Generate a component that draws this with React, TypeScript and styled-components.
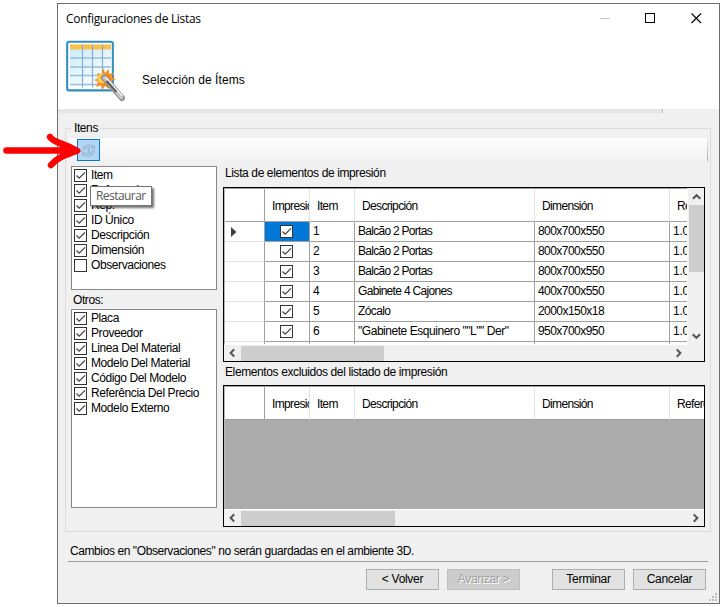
import React from 'react';
import styled, { createGlobalStyle } from 'styled-components';

const Global = createGlobalStyle`
  * { box-sizing: border-box; }
  body { margin: 0; background: #fff; }
`;

const Page = styled.div`
  position: relative;
  width: 723px;
  height: 607px;
  padding: 3px 0 0 57px;
  overflow: hidden;
  background: #fff;
  color: #000;
  font: 12px/15px 'Liberation Sans', Arial, sans-serif;
  letter-spacing: -0.41px;
  white-space: nowrap;
  cursor: default;
`;

const Dialog = styled.main`
  display: flex;
  flex-direction: column;
  width: 663px;
  height: 601px;
  border: 1px solid #6e6e6e;
  background: #f0f0f0;
`;

const Header = styled.header`
  height: 105px;
  flex: none;
  background: #fff;
`;

const TitleBar = styled.div`
  display: flex;
  align-items: center;
  height: 30px;
  padding: 0 17px 0 8px;
`;

const Title = styled.h1`
  flex: 1;
  margin: 0;
  font: 400 12px/16px 'Open Sans', sans-serif;
  letter-spacing: -0.31px;
`;

const Controls = styled.div`
  display: flex;
  gap: 35px;
  margin-top: -2px;
`;

const Banner = styled.div`
  display: flex;
  gap: 16px;
  padding: 4px 0 0 7px;
`;

const Step = styled.h2`
  margin: 34px 0 0;
  font-weight: 400;
  font-size: 12px;
  line-height: 16px;
  letter-spacing: 0.08px;
`;

const Divider = styled.div`
  flex: none;
  width: 605px;
  height: 4px;
  border-right: 1px solid #b9b9b9;
  background: #e5e5e5;
`;

const Group = styled.fieldset`
  flex: none;
  width: 646px;
  height: 411px;
  margin: 8px 0 0 7px;
  padding: 0;
  border: 1px solid #dcdcdc;
  min-width: 0;
`;

const Legend = styled.legend`
  height: 15px;
  margin-left: 5px;
  padding: 0 2px 0 3px;
`;

const ToolStrip = styled.div`
  display: flex;
  align-items: flex-start;
  width: 640px;
  height: 25px;
  margin: 2px 0 0 2px;
  padding: 1px 0 0 9px;
  border-radius: 2px;
  background: linear-gradient(#fdfdfd, #f7f7f7 50%, #f0f0f0);
`;

const StripEnd = styled.i`
  width: 1px;
  height: 22px;
  margin-left: auto;
  background: linear-gradient(#f0f0f0, #a8a8a8);
`;

const ToolButton = styled.button`
  display: flex;
  align-items: center;
  justify-content: center;
  width: 23px;
  height: 22px;
  padding: 0;
  border: 1px solid #0078d7;
  background: #b3d7f3;
`;

const Columns = styled.div`
  display: flex;
  gap: 6px;
  padding: 3px 0 0 5px;
`;

const Lists = styled.div`
  width: 146px;
`;

const ListBox = styled.ul<{ $height: number }>`
  height: ${(p) => p.$height}px;
  margin: 0;
  padding: 1px 2px;
  border: 1px solid #828790;
  background: #fff;
  list-style: none;
`;

const ListItem = styled.li`
  display: flex;
  align-items: center;
  gap: 4px;
  height: 15px;
`;

const ListLabel = styled.div`
  height: 19px;
  padding: 3px 0 0 2px;
`;

const Grids = styled.div`
  width: 482px;
`;

const GridLabel = styled.div<{ $height: number; $top: number }>`
  height: ${(p) => p.$height}px;
  padding: ${(p) => p.$top}px 0 0 2px;
  letter-spacing: -0.39px;
`;

const Grid = styled.div<{ $height: number }>`
  display: grid;
  grid-template-columns: minmax(0, 1fr) auto;
  grid-template-rows: minmax(0, 1fr) 16px;
  height: ${(p) => p.$height}px;
  border: 1px solid #000;
  background: #f0f0f0;
`;

const GridView = styled.div<{ $empty?: boolean }>`
  overflow: hidden;
  border-top: 1px solid #a0a0a0;
  border-left: 1px solid #b8b8b8;
  border-bottom: 1px solid #fff;
  background: ${(p) => (p.$empty ? '#ababab' : '#fff')};
`;

const Row = styled.div<{ $head?: boolean }>`
  display: grid;
  grid-template-columns: 40px 45px 45px 180px 135px 80px;
  width: 525px;
  height: ${(p) => (p.$head ? 33 : 20)}px;
  background: #fff;
`;

const HeadCell = styled.div<{ $corner?: boolean }>`
  overflow: hidden;
  padding: 10px 0 0 7px;
  border-right: 1px solid ${(p) => (p.$corner ? '#a0a0a0' : '#e3e3e3')};
  border-bottom: 1px solid #a0a0a0;
  letter-spacing: -0.65px;
`;

const Clip = styled.div`
  overflow: hidden;
`;

const RowHead = styled.div`
  display: flex;
  align-items: center;
  padding-left: 6px;
  border-right: 1px solid #a0a0a0;
  border-bottom: 1px solid #e3e3e3;
`;

const Cell = styled.div<{ $active?: boolean; $center?: boolean; $tracking?: number }>`
  display: flex;
  align-items: center;
  justify-content: ${(p) => (p.$center ? 'center' : 'flex-start')};
  padding: 0 ${(p) => (p.$center ? 2 : 0)}px 0 ${(p) => (p.$center ? 0 : 3)}px;
  border-right: 1px solid #a0a0a0;
  border-bottom: 1px solid #a0a0a0;
  background: ${(p) => (p.$active ? '#0078d7' : '#fff')};
  letter-spacing: ${(p) => p.$tracking ?? -0.55}px;
`;

const VScroll = styled.div`
  display: flex;
  flex-direction: column;
  align-items: center;
  width: 17px;
  padding: 1px 1px 1px 1px;
  border-left: 1px solid #fff;
`;

const VThumb = styled.div`
  width: 15px;
  height: 67px;
  margin-bottom: auto;
  background: #cdcdcd;
`;

const HScroll = styled.div`
  display: flex;
  align-items: center;
`;

const HThumb = styled.div<{ $width: number }>`
  width: ${(p) => p.$width}px;
  height: 15px;
  margin-right: auto;
  background: #cdcdcd;
`;

const Note = styled.p`
  width: 640px;
  height: 21px;
  margin: 9px 0 0 10px;
  padding: 3px 0 0 2px;
  border-bottom: 1px solid #a0a0a0;
`;

const Footer = styled.footer`
  display: flex;
  gap: 8px;
  padding: 7px 0 0 308px;
`;

const Button = styled.button<{ $apart?: boolean }>`
  width: 73px;
  height: 21px;
  margin-left: ${(p) => (p.$apart ? 24 : 0)}px;
  padding: 0 0 1px;
  border: 1px solid #adadad;
  background: #e1e1e1;
  color: #000;
  font: inherit;
  letter-spacing: -0.3px;
  &:disabled {
    border-color: #bfbfbf;
    background: #ccc;
    color: #a0a0a0;
    text-shadow: 1px 1px 0 #fff;
  }
`;

const Grip = styled.svg`
  display: block;
  margin: 3px 1px 0 auto;
`;

const Tooltip = styled.div`
  position: absolute;
  left: 90px;
  top: 186px;
  width: 62px;
  height: 20px;
  padding-left: 5px;
  border: 1px solid #767676;
  background: #fff;
  box-shadow: 2px 2px 2px rgba(0, 0, 0, 0.55);
  color: #575757;
  font: 12px/18px 'Open Sans', sans-serif;
  letter-spacing: -0.55px;
`;

const Pointer = styled.svg`
  position: absolute;
  left: 0;
  top: 130px;
`;

const BoxIcon = styled.svg`
  display: block;
  flex: none;
`;

function Check({ on = true }: { on?: boolean }) {
  return (
    <BoxIcon width="13" height="13" viewBox="0 0 13 13">
      <rect x=".5" y=".5" width="12" height="12" fill="#fff" stroke="#333" />
      {on && <path d="M2.500 6.500 5.200 9.200 11 3.400" fill="none" stroke="#444" strokeWidth="1.300" />}
    </BoxIcon>
  );
}

function Chevron({ turn }: { turn: number }) {
  return (
    <BoxIcon width="17" height="16" viewBox="0 0 17 16">
      <path
        d="M10.200 4.200 6.700 7.900l3.500 3.700"
        fill="none"
        stroke="#555"
        strokeWidth="2.100"
        transform={`rotate(${turn} 8.500 8)`}
      />
    </BoxIcon>
  );
}

function TableIcon() {
  return (
    <svg width="61" height="66" viewBox="0 0 61 66">
      <defs>
        <linearGradient id="sheet" x1="0" y1="0" x2="0.6" y2="1">
          <stop offset="0" stopColor="#c5e9fb" />
          <stop offset="1" stopColor="#fafeff" />
        </linearGradient>
      </defs>
      <rect x="1" y="4" width="48" height="50" rx="2" fill="#c6d4dc" />
      <rect x="2.200" y="3.700" width="45.600" height="48.600" rx="2" fill="#fff" stroke="#2f8fc0" strokeWidth="2" />
      <rect x="5" y="6.500" width="41" height="42" fill="url(#sheet)" />
      <rect x="5" y="6.500" width="41" height="5" fill="#fbbf4c" />
      <path d="M5 20h41M5 29h41M5 37.500h41M5 46.500h41" stroke="#9bbdd8" strokeWidth="1.400" />
      <path d="M17.500 6.500v43M27.500 6.500v43M37.500 6.500v43" stroke="#86add0" strokeWidth="1.200" />
      <path
        d="m38 30 2 5 4-4 0 5 5-1-3 4 5 2-5 2 3 4-5-1 0 5-4-3-3 4-1-5-5 2 2-5-4-2 5-2-2-5 5 1Z"
        fill="#f58a1d"
      />
      <circle cx="37" cy="40.500" r="5" fill="#ffc94d" />
      <path d="m39 39.500 18 20.500" stroke="#8c8c8c" strokeWidth="6" strokeLinecap="round" />
      <path d="m39.500 40 17 19.500" stroke="#c4c4c4" strokeWidth="4" strokeLinecap="round" />
      <path d="m42 42.500 10 11" stroke="#5c5c5c" strokeWidth="3.500" />
      <path d="m41 39.500 16 18" stroke="#f4f4f4" strokeWidth="1.500" strokeLinecap="round" />
    </svg>
  );
}

function RefreshIcon() {
  return (
    <svg width="15" height="15" viewBox="0 0 15 15" fill="none">
      <path d="M2.500 7.500C2.500 3 8 .8 12 4M12.500 7c0 5-5.500 7-9 4" stroke="#86abd0" strokeWidth="2.400" />
      <path d="M2.500 7.500C2.500 3 8 .8 12 4M12.500 7c0 5-5.500 7-9 4" stroke="#c8def0" strokeWidth="1" />
      <path d="m14 1.500 0 5-4.500-1ZM1 13.500l0-5 4.500 1.500Z" fill="#98bade" />
      <path d="m5.500 6 3-.5-.5 2-1.500 2 3-.5" stroke="#89aed0" />
    </svg>
  );
}

const itemFields = [
  ['Item', true],
  ['Referencia', true],
  ['Rep.', true],
  ['ID Único', true],
  ['Descripción', true],
  ['Dimensión', true],
  ['Observaciones', false],
] as const;

const otherFields = [
  'Placa',
  'Proveedor',
  'Linea Del Material',
  'Modelo Del Material',
  'Código Del Modelo',
  'Referência Del Precio',
  'Modelo Externo',
];

const rows = [
  { item: '1', description: 'Balcão 2 Portas', size: '800x700x550', tracking: -0.72 },
  { item: '2', description: 'Balcão 2 Portas', size: '800x700x550', tracking: -0.72 },
  { item: '3', description: 'Balcão 2 Portas', size: '800x700x550', tracking: -0.72 },
  { item: '4', description: 'Gabinete 4 Cajones', size: '400x700x550', tracking: -0.68 },
  { item: '5', description: 'Zócalo', size: '2000x150x18', tracking: -0.6 },
  { item: '6', description: '"Gabinete Esquinero ""L"" Der"', size: '950x700x950', tracking: -0.46 },
];

function GridHead() {
  return (
    <Row $head>
      <HeadCell $corner />
      {['Impresión', 'Item', 'Descripción', 'Dimensión', 'Referencia'].map((name) => (
        <HeadCell key={name}>
          <Clip>{name}</Clip>
        </HeadCell>
      ))}
    </Row>
  );
}

export default function App() {
  return (
    <Page>
      <Global />
      <Dialog>
        <Header>
          <TitleBar>
            <Title>Configuraciones de Listas</Title>
            <Controls>
              <svg width="11" height="11">
                <path d="M1 5.500h10" stroke="#c8c8c8" />
              </svg>
              <svg width="11" height="11">
                <rect x=".5" y=".5" width="9" height="9" fill="none" stroke="#000" />
              </svg>
              <svg width="11" height="11">
                <path d="m.5.5 9.500 9.500M10 .5.500 10" stroke="#000" strokeWidth="1.100" />
              </svg>
            </Controls>
          </TitleBar>
          <Banner>
            <TableIcon />
            <Step>Selección de Ítems</Step>
          </Banner>
        </Header>
        <Divider />
        <Group>
          <Legend>Itens</Legend>
          <ToolStrip>
            <ToolButton aria-label="Restaurar">
              <RefreshIcon />
            </ToolButton>
            <StripEnd />
          </ToolStrip>
          <Columns>
            <Lists>
              <ListBox $height={124}>
                {itemFields.map(([name, on]) => (
                  <ListItem key={name}>
                    <Check on={on} />
                    {name}
                  </ListItem>
                ))}
              </ListBox>
              <ListLabel>Otros:</ListLabel>
              <ListBox $height={199}>
                {otherFields.map((name) => (
                  <ListItem key={name}>
                    <Check />
                    {name}
                  </ListItem>
                ))}
              </ListBox>
            </Lists>
            <Grids>
              <GridLabel $height={21} $top={0}>
                Lista de elementos de impresión
              </GridLabel>
              <Grid $height={175}>
                <GridView>
                  <GridHead />
                  {rows.map(({ item, description, size, tracking }, i) => (
                    <Row key={item}>
                      <RowHead>
                        {i === 0 && (
                          <svg width="6" height="10">
                            <path d="M0 0v10l5.500-5Z" fill="#404040" />
                          </svg>
                        )}
                      </RowHead>
                      <Cell $center $active={i === 0}>
                        <Check />
                      </Cell>
                      <Cell>{item}</Cell>
                      <Cell $tracking={tracking}>{description}</Cell>
                      <Cell>{size}</Cell>
                      <Cell $tracking={-0.2}>1.0</Cell>
                    </Row>
                  ))}
                  <Row>
                    <RowHead />
                    <Cell />
                    <Cell />
                    <Cell />
                    <Cell />
                    <Cell />
                  </Row>
                </GridView>
                <VScroll>
                  <Chevron turn={90} />
                  <VThumb />
                  <Chevron turn={-90} />
                </VScroll>
                <HScroll>
                  <Chevron turn={0} />
                  <HThumb $width={143} />
                  <Chevron turn={180} />
                </HScroll>
              </Grid>
              <GridLabel $height={23} $top={3}>
                Elementos excluidos del listado de impresión
              </GridLabel>
              <Grid $height={142}>
                <GridView $empty>
                  <GridHead />
                </GridView>
                <i />
                <HScroll>
                  <Chevron turn={0} />
                  <HThumb $width={154} />
                  <Chevron turn={180} />
                </HScroll>
              </Grid>
            </Grids>
          </Columns>
        </Group>
        <Note>Cambios en "Observaciones" no serán guardadas en el ambiente 3D.</Note>
        <Footer>
          <Button>&lt; Volver</Button>
          <Button disabled>Avanzar &gt;</Button>
          <Button $apart>Terminar</Button>
          <Button>Cancelar</Button>
        </Footer>
        <Grip width="9" height="9" fill="#bfbfbf">
          <path d="M6 0h2v2h-2ZM3 3h2v2h-2ZM6 3h2v2h-2ZM0 6h2v2h-2ZM3 6h2v2h-2ZM6 6h2v2h-2Z" />
        </Grip>
      </Dialog>
      <Tooltip>Restaurar</Tooltip>
      <Pointer width="84" height="42" viewBox="0 0 84 42" fill="none" stroke="#fe0000" strokeLinecap="round">
        <path d="M6.500 20.500H74" strokeWidth="6.500" />
        <path
          d="M50 7C54 13 61 12 77 20.800 64 25 57 28 51 35"
          strokeWidth="6.500"
          strokeLinejoin="round"
        />
        <path d="M60 15 82 21 60 27Z" fill="#fe0000" stroke="none" />
      </Pointer>
    </Page>
  );
}
